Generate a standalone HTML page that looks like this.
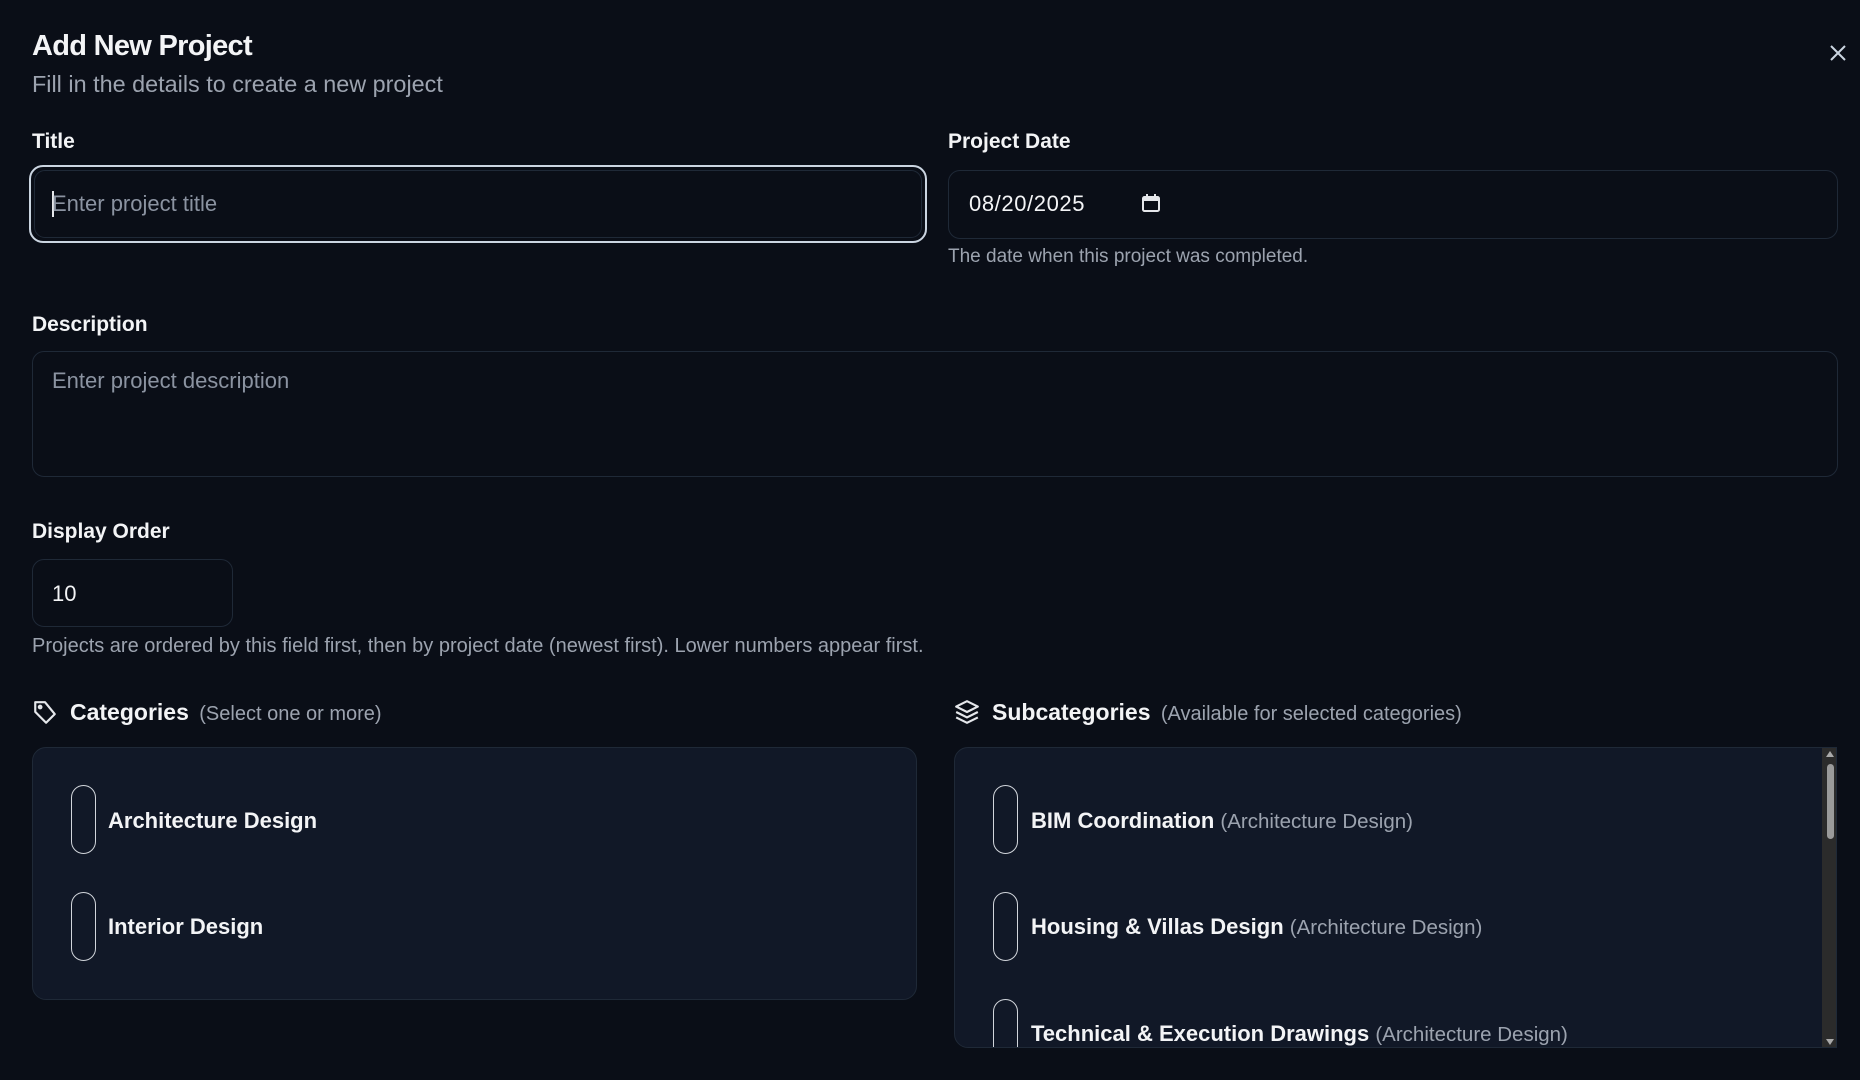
<!DOCTYPE html>
<html><head><meta charset="utf-8"><style>
*{box-sizing:border-box;margin:0;padding:0}
body{width:1860px;height:1080px;background:#0a0e17;font-family:"Liberation Sans",sans-serif;color:#f3f4f6;position:relative;overflow:hidden}
.a{position:absolute}
.lbl{font-size:21px;font-weight:bold;color:#f3f4f6}
.help{font-size:20px;color:#9ca3af}
.inp{border:1px solid #1f2937;border-radius:12px;background:#0a0e17}
.ph{font-size:22px;color:#8b93a1}
.box{background:#111827;border:1px solid #1f2937;border-radius:14px}
.pill{width:25px;height:69px;border:1.5px solid #d1d5db;border-radius:13px}
.it{font-size:22px;font-weight:bold;color:#f3f4f6}
.it span{font-weight:normal;font-size:20.5px;color:#9ca3af}
</style></head><body>
<div class="a" style="left:32px;top:30px;font-size:29px;font-weight:bold;letter-spacing:-0.7px">Add New Project</div>
<div class="a" style="left:32px;top:71px;font-size:23.4px;color:#9ca3af">Fill in the details to create a new project</div>
<svg class="a" style="left:1829px;top:44px" width="18" height="18" viewBox="0 0 18 18"><path d="M2 2L16 16M16 2L2 16" stroke="#cbd5e1" stroke-width="2"/></svg>

<div class="a lbl" style="left:32px;top:130px">Title</div>
<div class="a" style="left:29px;top:165px;width:898px;height:78px;border:2.5px solid #cbd5e1;border-radius:14px"></div>
<div class="a inp" style="left:34px;top:170px;width:888px;height:68px;border-radius:11px"></div>
<div class="a" style="left:52px;top:191px;width:1.5px;height:26px;background:#e5e7eb"></div>
<div class="a ph" style="left:52px;top:191px">Enter project title</div>

<div class="a lbl" style="left:948px;top:130px">Project Date</div>
<div class="a inp" style="left:948px;top:170px;width:890px;height:69px"></div>
<div class="a" style="left:969px;top:191px;font-size:22px;color:#f3f4f6;letter-spacing:0.6px">08/20/2025</div>
<svg class="a" style="left:1141px;top:193px" width="20" height="20" viewBox="0 0 20 20"><rect x="2" y="4" width="16" height="14" rx="1.5" fill="none" stroke="#e5e7eb" stroke-width="2"/><rect x="2" y="4" width="16" height="4" fill="#e5e7eb"/><path d="M6 1v4M14 1v4" stroke="#e5e7eb" stroke-width="2"/></svg>
<div class="a help" style="left:948px;top:246px;font-size:19px">The date when this project was completed.</div>

<div class="a lbl" style="left:32px;top:313px">Description</div>
<div class="a inp" style="left:32px;top:351px;width:1806px;height:126px"></div>
<div class="a ph" style="left:52px;top:368px">Enter project description</div>

<div class="a lbl" style="left:32px;top:520px">Display Order</div>
<div class="a inp" style="left:32px;top:559px;width:201px;height:68px"></div>
<div class="a" style="left:52px;top:581px;font-size:22px">10</div>
<div class="a help" style="left:32px;top:635px">Projects are ordered by this field first, then by project date (newest first). Lower numbers appear first.</div>

<svg class="a" style="left:32px;top:700px" width="26" height="26" viewBox="0 0 24 24" fill="none" stroke="#e5e7eb" stroke-width="2" stroke-linejoin="round"><path d="M12 2H3v9l10 10 8-8z"/><circle cx="7.5" cy="6.5" r="1.2"/></svg>
<div class="a" style="left:70px;top:699px;font-size:23px;font-weight:bold">Categories <span style="font-size:20px;font-weight:normal;color:#9ca3af;margin-left:4px">(Select one or more)</span></div>
<div class="a box" style="left:32px;top:747px;width:885px;height:253px"></div>
<div class="a pill" style="left:71px;top:785px"></div>
<div class="a it" style="left:108px;top:808px">Architecture Design</div>
<div class="a pill" style="left:71px;top:892px"></div>
<div class="a it" style="left:108px;top:914px">Interior Design</div>

<svg class="a" style="left:954px;top:699px" width="26" height="26" viewBox="0 0 24 24" fill="none" stroke="#e5e7eb" stroke-width="2" stroke-linejoin="round"><path d="M12 2L2 7l10 5 10-5z"/><path d="M2 12l10 5 10-5"/><path d="M2 17l10 5 10-5"/></svg>
<div class="a" style="left:992px;top:699px;font-size:23px;font-weight:bold">Subcategories <span style="font-size:20px;font-weight:normal;color:#9ca3af;margin-left:4px">(Available for selected categories)</span></div>
<div class="a box" style="left:954px;top:747px;width:883px;height:301px;overflow:hidden;border-radius:14px 0 0 14px">
<div class="a pill" style="left:38px;top:37px"></div>
<div class="a it" style="left:76px;top:60px;white-space:nowrap">BIM Coordination <span>(Architecture Design)</span></div>
<div class="a pill" style="left:38px;top:144px"></div>
<div class="a it" style="left:76px;top:166px;white-space:nowrap">Housing &amp; Villas Design <span>(Architecture Design)</span></div>
<div class="a pill" style="left:38px;top:251px"></div>
<div class="a it" style="left:76px;top:273px;white-space:nowrap">Technical &amp; Execution Drawings <span>(Architecture Design)</span></div>
<div class="a" style="left:867px;top:0;width:16px;height:301px;background:#2b2b2b"></div>
<div class="a" style="left:872px;top:16px;width:7px;height:75px;background:#9a9a9a;border-radius:4px"></div>
<div class="a" style="left:871px;top:3px;width:0;height:0;border-left:4px solid transparent;border-right:4px solid transparent;border-bottom:6px solid #aaa"></div>
<div class="a" style="left:871px;top:291px;width:0;height:0;border-left:4px solid transparent;border-right:4px solid transparent;border-top:6px solid #aaa"></div>
</div>
</body></html>
